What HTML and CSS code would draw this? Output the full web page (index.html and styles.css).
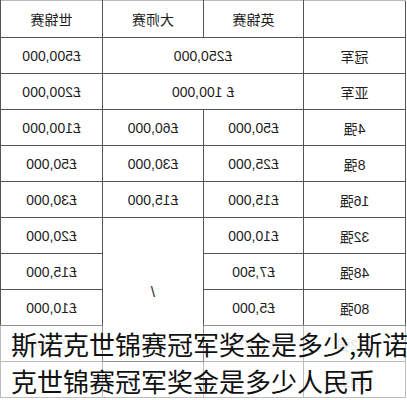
FILE: index.html
```html
<!DOCTYPE html>
<html lang="zh">
<head>
<meta charset="utf-8">
<link rel="stylesheet" href="styles.css">
</head>
<body>
<div class="page">
  <table class="prize">
    <colgroup>
      <col class="c-rank"><col class="c-uk"><col class="c-master"><col class="c-world">
    </colgroup>
    <tr class="head">
      <td></td><td>英锦赛</td><td>大师赛</td><td>世锦赛</td>
    </tr>
    <tr><td>冠军</td><td colspan="2">£250,000</td><td>£500,000</td></tr>
    <tr><td>亚军</td><td colspan="2">£ 100,000</td><td>£200,000</td></tr>
    <tr><td>4强</td><td>£50,000</td><td>£60,000</td><td>£100,000</td></tr>
    <tr><td>8强</td><td>£25,000</td><td>£30,000</td><td>£50,000</td></tr>
    <tr><td>16强</td><td>£15,000</td><td>£15,000</td><td>£30,000</td></tr>
    <tr><td>32强</td><td>£10,000</td><td rowspan="4" class="slash">/</td><td>£20,000</td></tr>
    <tr><td>48强</td><td>£7,500</td><td>£15,000</td></tr>
    <tr><td>80强</td><td>£5,000</td><td>£10,000</td></tr>
    <tr class="faint"><td>112强</td><td>£2,500</td><td>£5,000</td></tr>
    <tr class="faint"><td>单位</td><td></td><td></td><td></td></tr>
  </table>
  <div class="caption">
    <div class="line">斯诺克世锦赛冠军奖金是多少,斯诺</div>
    <div class="line">克世锦赛冠军奖金是多少人民币</div>
  </div>
</div>
</body>
</html>
```
FILE: styles.css
```css
html, body {
  margin: 0;
  padding: 0;
  background: #fff;
}
.page {
  position: relative;
  width: 407px;
  height: 400px;
  overflow: hidden;
}
.prize {
  width: 405px;
  border-collapse: collapse;
  table-layout: fixed;
  transform: scaleX(-1);
  font-family: "Liberation Sans", "Noto Sans CJK SC", sans-serif;
  font-size: 14px;
  color: #1e1e1e;
}
.c-rank { width: 102px; }
.c-uk { width: 100px; }
.c-master { width: 101px; }
.c-world { width: 102px; }
.prize td {
  border: 1px solid #555;
  height: 35px;
  padding: 0;
  text-align: center;
  vertical-align: middle;
}
.prize tr.head td {
  height: 36px;
  border-top-color: #bbb;
}
.prize td.slash {
  font-size: 15px;
  padding-top: 4px;
}
.prize tr.faint td {
  color: #d8d8d8;
  border-color: #999;
}
.caption {
  position: absolute;
  left: 0;
  top: 325px;
  width: 407px;
  height: 75px;
  background: rgba(255, 255, 255, 0.35);
  font-family: "Noto Sans CJK SC", sans-serif;
  font-size: 26px;
  color: #111;
  padding-left: 11px;
  box-sizing: border-box;
}
.caption .line {
  height: 37px;
  line-height: 37px;
  white-space: nowrap;
}
```
